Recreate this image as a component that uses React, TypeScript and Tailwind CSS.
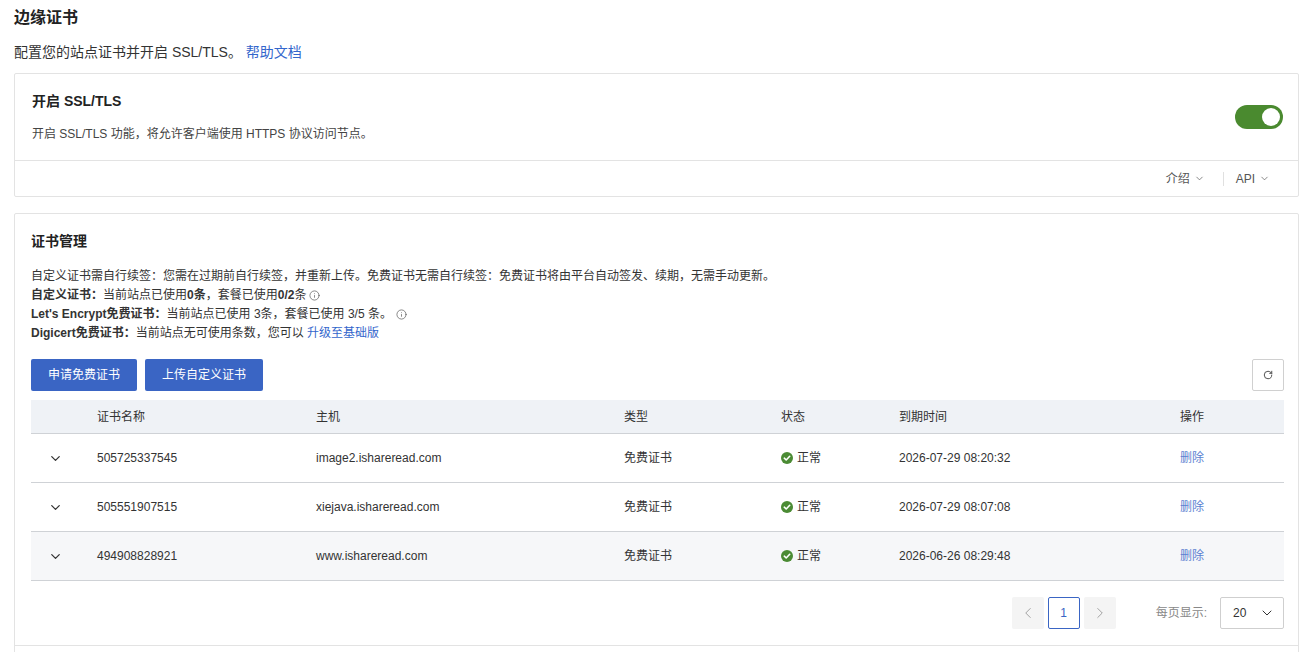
import { ChevronDown, ChevronLeft, ChevronRight, RotateCw, Info } from 'lucide-react';

const FONT = { fontFamily: '"Liberation Sans", "Noto Sans CJK SC", sans-serif' };

interface Cert {
  id: string;
  host: string;
  expires: string;
}

const CERTS: Cert[] = [
  { id: '505725337545', host: 'image2.ishareread.com', expires: '2026-07-29 08:20:32' },
  { id: '505551907515', host: 'xiejava.ishareread.com', expires: '2026-07-29 08:07:08' },
  { id: '494908828921', host: 'www.ishareread.com', expires: '2026-06-26 08:29:48' },
];

function CheckDot() {
  return (
    <svg width="12" height="12" viewBox="0 0 12 12" className="shrink-0">
      <circle cx="6" cy="6" r="6" fill="#4b8b34" />
      <path d="M3.3 6.2 L5.2 8 L8.7 4.3" stroke="#fff" strokeWidth="1.6" fill="none" strokeLinecap="round" strokeLinejoin="round" />
    </svg>
  );
}

export default function App() {
  return (
    <div className="min-h-screen bg-white pl-[14px] pr-[2px] pt-[8px] text-[#333]" style={FONT}>
      {/* 页头 */}
      <h1 className="text-[16px] font-bold leading-[20px] text-[#222]">边缘证书</h1>
      <p className="mt-[14px] text-[14px] leading-[20px] text-[#333]">
        配置您的站点证书并开启 SSL/TLS。 <span className="text-[#3366cc]">帮助文档</span>
      </p>

      {/* 开启 SSL/TLS */}
      <section className="mt-[11px] rounded-[2px] border border-[#e3e3e3]">
        <div className="flex items-center justify-between px-[17px] pt-[17px] pb-[17px]">
          <div>
            <h2 className="text-[14px] font-bold leading-[20px] text-[#222]">开启 SSL/TLS</h2>
            <p className="mt-[14px] text-[12px] leading-[18px] text-[#444]">
              开启 SSL/TLS 功能，将允许客户端使用 HTTPS 协议访问节点。
            </p>
          </div>
          <div className="relative mr-[-2px] h-[24px] w-[48px] rounded-full bg-[#4a8a2f]">
            <span className="absolute right-[3px] top-[3px] h-[18px] w-[18px] rounded-full bg-white" />
          </div>
        </div>
        <div className="flex h-[36px] items-center justify-end border-t border-[#e3e3e3] pr-[28px] text-[12px] text-[#555]">
          <span className="flex items-center gap-[4px]">
            介绍 <ChevronDown size={11} strokeWidth={1.5} />
          </span>
          <span className="ml-[18px] mr-[12px] h-[14px] w-px bg-[#e0e0e0]" />
          <span className="flex items-center gap-[4px]">
            API <ChevronDown size={11} strokeWidth={1.5} />
          </span>
        </div>
      </section>

      {/* 证书管理 */}
      <section className="mt-[16px] rounded-[2px] border border-[#e3e3e3]">
        <div className="pl-[16px] pr-[14px] pt-[17px]">
          <h2 className="text-[14px] font-bold leading-[20px] text-[#222]">证书管理</h2>
          <div className="mt-[16px] text-[12px] leading-[19px] text-[#333]">
            <p>自定义证书需自行续签：您需在过期前自行续签，并重新上传。免费证书无需自行续签：免费证书将由平台自动签发、续期，无需手动更新。</p>
            <p className="flex items-center">
              <b>自定义证书：</b>当前站点已使用<b>0条</b>，套餐已使用<b>0/2</b>条
              <Info size={11} strokeWidth={1.5} className="ml-[3px] text-[#555]" />
            </p>
            <p className="flex items-center">
              <b>Let's Encrypt免费证书：</b>当前站点已使用 3条，套餐已使用 3/5 条。
              <Info size={11} strokeWidth={1.5} className="ml-[4px] text-[#555]" />
            </p>
            <p>
              <b>Digicert免费证书：</b>当前站点无可使用条数，您可以 <span className="text-[#3366cc]">升级至基础版</span>
            </p>
          </div>

          <div className="mt-[16px] flex items-center justify-between">
            <div className="flex gap-[8px]">
              <button className="h-[32px] rounded-[2px] bg-[#3a65c4] px-[17px] text-[12px] text-white">申请免费证书</button>
              <button className="h-[32px] rounded-[2px] bg-[#3a65c4] px-[17px] text-[12px] text-white">上传自定义证书</button>
            </div>
            <button className="flex h-[32px] w-[32px] items-center justify-center rounded-[2px] border border-[#d0d0d0] bg-white text-[#333]">
              <RotateCw size={10} strokeWidth={2} />
            </button>
          </div>

          {/* 表格 */}
          <div className="mt-[9px] text-[12px]">
            <div className="grid h-[34px] grid-cols-[66px_219px_308px_157px_118px_281px_1fr] items-center border-b border-[#cfd2d6] bg-[#eff2f6] text-[#333]">
              <span />
              <span>证书名称</span>
              <span>主机</span>
              <span>类型</span>
              <span>状态</span>
              <span>到期时间</span>
              <span>操作</span>
            </div>
            {CERTS.map((c, i) => (
              <div
                key={c.id}
                className={`grid h-[49px] grid-cols-[66px_219px_308px_157px_118px_281px_1fr] items-center border-b border-[#cfd2d6] text-[#333] ${
                  i === 2 ? 'bg-[#f6f7f9]' : 'bg-white'
                }`}
              >
                <span className="pl-[17px]">
                  <ChevronDown size={15} strokeWidth={2} className="text-[#333]" />
                </span>
                <span>{c.id}</span>
                <span>{c.host}</span>
                <span>免费证书</span>
                <span className="flex items-center gap-[4px]">
                  <CheckDot /> 正常
                </span>
                <span>{c.expires}</span>
                <span className="text-[#5c7fd1]">删除</span>
              </div>
            ))}
          </div>

          {/* 分页 */}
          <div className="flex h-[64px] items-center justify-end text-[12px]">
            <div className="flex gap-[4px]">
              <span className="flex h-[32px] w-[32px] items-center justify-center rounded-[2px] bg-[#f4f4f4] text-[#999]">
                <ChevronLeft size={18} strokeWidth={1.2} />
              </span>
              <span className="flex h-[32px] w-[32px] items-center justify-center rounded-[2px] border border-[#3a65c4] text-[#3a65c4]">1</span>
              <span className="flex h-[32px] w-[32px] items-center justify-center rounded-[2px] bg-[#f4f4f4] text-[#999]">
                <ChevronRight size={18} strokeWidth={1.2} />
              </span>
            </div>
            <span className="ml-[40px] mr-[3px] text-[#888]">每页显示:</span>
            <span className="ml-[10px] flex h-[32px] w-[64px] items-center justify-between rounded-[2px] border border-[#cfcfcf] pl-[12px] pr-[8px] text-[#333]">
              20 <ChevronDown size={16} strokeWidth={1.5} />
            </span>
          </div>
        </div>
        <div className="h-[40px] border-t border-[#e3e3e3]" />
      </section>
    </div>
  );
}
